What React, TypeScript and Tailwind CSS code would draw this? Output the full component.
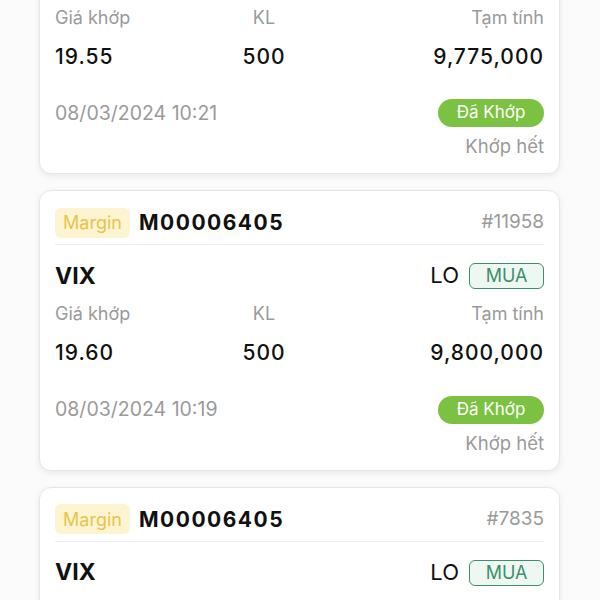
import React from 'react';

type Order = {
  account: string;
  id: string;
  symbol: string;
  price: string;
  qty: string;
  total: string;
  time: string;
};

const orders: Order[] = [
  { account: 'M00006405', id: '#12044', symbol: 'VIX', price: '19.55', qty: '500', total: '9,775,000', time: '08/03/2024 10:21' },
  { account: 'M00006405', id: '#11958', symbol: 'VIX', price: '19.60', qty: '500', total: '9,800,000', time: '08/03/2024 10:19' },
  { account: 'M00006405', id: '#7835', symbol: 'VIX', price: '19.60', qty: '500', total: '9,800,000', time: '08/03/2024 10:15' },
];

function OrderCard({ order }: { order: Order }) {
  return (
    <article className="rounded-[12px] border border-[#e6e6e6] bg-white px-[15px] pt-4 pb-4 shadow-[0_2px_6px_rgba(0,0,0,0.08)]">
      {/* Header */}
      <div className="flex items-center border-b border-[#ececec] pb-1.5">
        <span className="flex h-[30px] w-[75px] items-center justify-center rounded-md bg-[#fdf4d2] text-[18px] text-[#e6c54a]">
          Margin
        </span>
        <span className="ml-[9px] text-[21px] font-bold tracking-[1.5px] text-[#111]">{order.account}</span>
        <span className="ml-auto text-[19px] text-[#9a9a9a]">{order.id}</span>
      </div>

      {/* Symbol row */}
      <div className="mt-[17px] flex h-[27px] items-center">
        <span className="text-[23px] font-bold text-[#111]">{order.symbol}</span>
        <span className="ml-auto text-[22px] text-[#111]">LO</span>
        <span className="ml-[10px] flex h-[26px] w-[75px] items-center justify-center rounded-md border-[1.5px] border-[#3e8e6a] bg-[#eef8f3] text-[18px] text-[#3e8e6a]">
          MUA
        </span>
      </div>

      {/* Labels + values */}
      <div className="mt-[14px] grid grid-cols-[170px_78px_1fr] text-[18px] leading-[22px] text-[#9a9a9a]">
        <span>Giá khớp</span>
        <span className="text-center">KL</span>
        <span className="text-right">Tạm tính</span>
      </div>
      <div className="mt-[14px] grid grid-cols-[170px_78px_1fr] text-[21px] font-medium leading-[28px] tracking-[1px] text-[#111]">
        <span>{order.price}</span>
        <span className="text-center">{order.qty}</span>
        <span className="text-right">{order.total}</span>
      </div>

      {/* Status */}
      <div className="mt-[28px] flex items-center">
        <span className="text-[19.5px] text-[#9a9a9a]">{order.time}</span>
        <span className="ml-auto flex h-[28px] w-[106px] items-center justify-center rounded-full bg-[#7cc242] text-[17px] text-white">
          Đã Khớp
        </span>
      </div>
      <div className="mt-[7px] text-right text-[18.5px] leading-[22px] text-[#9a9a9a]">Khớp hết</div>
    </article>
  );
}

export default function App() {
  return (
    <div
      className="h-[600px] w-[600px] overflow-hidden bg-[#fbfbfb]"
      style={{ fontFamily: 'Inter, "Noto Sans", sans-serif' }}
    >
      <div className="-mt-[107px] ml-[39px] flex w-[521px] flex-col gap-[16px]">
        {orders.map((o) => (
          <OrderCard key={o.id} order={o} />
        ))}
      </div>
    </div>
  );
}
